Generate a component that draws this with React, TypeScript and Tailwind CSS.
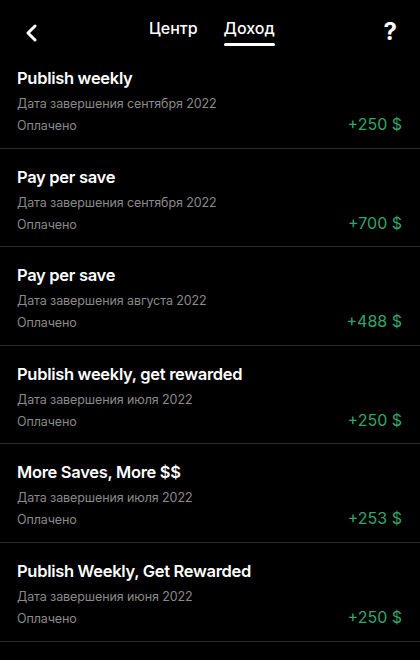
import React from "react";

const items = [
  { title: "Publish weekly", date: "Дата завершения сентября 2022", amount: "+250 $" },
  { title: "Pay per save", date: "Дата завершения сентября 2022", amount: "+700 $" },
  { title: "Pay per save", date: "Дата завершения августа 2022", amount: "+488 $" },
  { title: "Publish weekly, get rewarded", date: "Дата завершения июля 2022", amount: "+250 $" },
  { title: "More Saves, More $$", date: "Дата завершения июля 2022", amount: "+253 $" },
  { title: "Publish Weekly, Get Rewarded", date: "Дата завершения июня 2022", amount: "+250 $" },
];

function Row({ title, date, amount }: { title: string; date: string; amount: string }) {
  return (
    <div className="h-[98.6px] border-b border-[#2c2c2c] px-[17px] pt-[17px]">
      <div className="text-[16.5px] leading-[22px] font-semibold tracking-[-0.3px] text-white">{title}</div>
      <div className="mt-[5px] text-[12.5px] leading-[20px] tracking-[-0.1px] text-[#8a8a8a]">{date}</div>
      <div className="mt-[2px] h-[20px] flex items-center justify-between">
        <span className="text-[12.5px] leading-[20px] tracking-[-0.1px] text-[#8a8a8a]">Оплачено</span>
        <span className="text-[16px] leading-[22px] text-[#33a66a] mb-[4px] pr-[1px]">{amount}</span>
      </div>
    </div>
  );
}

export default function App() {
  return (
    <div
      className="w-[420px] h-[660px] bg-black overflow-hidden"
      style={{ fontFamily: "Inter, 'Liberation Sans', sans-serif" }}
    >
      <div className="relative h-[50px] flex items-start justify-between px-[24px]">
        <svg width="14" height="18" viewBox="0 0 14 18" className="mt-[24px]">
          <path d="M11 2 L4 9 L11 16" stroke="white" strokeWidth="3" fill="none" strokeLinecap="round" strokeLinejoin="round" />
        </svg>
        <div className="absolute left-[149px] top-[17px] flex gap-[26px] text-[16px] leading-[22px] font-medium text-white">
          <span>Центр</span>
          <span className="relative">
            Доход
            <span className="absolute left-0 right-0 top-[26px] h-[3px] rounded-full bg-white" />
          </span>
        </div>
        <span className="mt-[18px] mr-[-1px] text-[24px] leading-[28px] font-bold text-white">?</span>
      </div>
      {items.map((it, i) => (
        <Row key={i} {...it} />
      ))}
    </div>
  );
}
